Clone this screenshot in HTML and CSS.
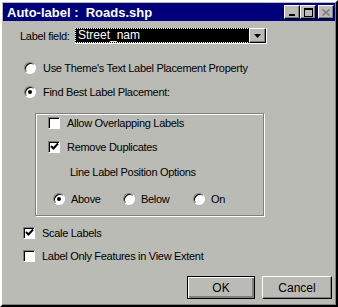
FILE: index.html
```html
<!DOCTYPE html>
<html lang="en">
<head>
    <meta charset="UTF-8">
    <title>Auto-label : Roads.shp</title>
    <link rel="stylesheet" href="styles.css">
</head>
<body>
    <div class="window">
        <div class="title-bar">
            <span class="title-text">Auto-label :  Roads.shp</span>
            <div class="title-buttons">
                <span class="title-btn">
                    <svg width="8" height="8" viewBox="0 0 8 8"><rect x="1" y="6" width="6" height="2" fill="#000"/></svg>
                </span>
                <span class="title-btn">
                    <svg width="9" height="9" viewBox="0 0 9 9"><rect x="0.5" y="0.5" width="8" height="8" fill="none" stroke="#000"/><rect x="0" y="0" width="9" height="2" fill="#000"/></svg>
                </span>
                <span class="title-btn close-btn">
                    <svg width="8" height="7" viewBox="0 0 8 7"><path d="M0.5 0.5 L7.5 6.5 M7.5 0.5 L0.5 6.5" stroke="#808080" stroke-width="1.6" fill="none"/></svg>
                </span>
            </div>
        </div>

        <div class="content">
            <div class="field-row">
                <span class="field-label">Label field:</span>
                <div class="select">
                    <span class="select-value"><span class="focus">Street_nam</span></span>
                    <span class="select-arrow">
                        <svg width="7" height="4" viewBox="0 0 7 4"><path d="M0 0 H7 L3.5 4 Z" fill="#000"/></svg>
                    </span>
                </div>
            </div>

            <div class="option-row first-radio">
                <span class="radio"></span>
                <span>Use Theme's Text Label Placement Property</span>
            </div>
            <div class="option-row second-radio">
                <span class="radio checked"></span>
                <span>Find Best Label Placement:</span>
            </div>

            <div class="group-box">
                <div class="option-row">
                    <span class="checkbox"></span>
                    <span>Allow Overlapping Labels</span>
                </div>
                <div class="option-row second-check">
                    <span class="checkbox checked">
                        <svg width="9" height="9" viewBox="0 0 9 9"><path d="M1 4 L3.5 6.5 L8 1.5" stroke="#000" stroke-width="2" fill="none"/></svg>
                    </span>
                    <span>Remove Duplicates</span>
                </div>
                <div class="group-caption">Line Label Position Options</div>
                <div class="position-row">
                    <div class="position-item">
                        <span class="radio checked"></span>
                        <span>Above</span>
                    </div>
                    <div class="position-item">
                        <span class="radio"></span>
                        <span>Below</span>
                    </div>
                    <div class="position-item">
                        <span class="radio"></span>
                        <span>On</span>
                    </div>
                </div>
            </div>

            <div class="option-row scale-row">
                <span class="checkbox checked">
                    <svg width="9" height="9" viewBox="0 0 9 9"><path d="M1 4 L3.5 6.5 L8 1.5" stroke="#000" stroke-width="2" fill="none"/></svg>
                </span>
                <span>Scale Labels</span>
            </div>
            <div class="option-row extent-row">
                <span class="checkbox"></span>
                <span>Label Only Features in View Extent</span>
            </div>

            <div class="button-row">
                <button class="btn default-btn">OK</button>
                <button class="btn">Cancel</button>
            </div>
        </div>
    </div>
</body>
</html>
```

FILE: styles.css
```css
body {
    margin: 0;
    padding: 0;
    font-family: 'Liberation Sans', Arial, sans-serif;
    font-size: 11px;
    letter-spacing: -0.3px;
    color: #000;
    background-color: #bbbbb5;
}

.window {
    width: 338px;
    height: 307px;
    box-sizing: border-box;
    padding: 1px;
    border: 2px solid;
    border-color: #fff #000 #000 #fff;
    box-shadow: inset -1px -1px 0 #808080;
    background-color: #bbbbb5;
}

.title-bar {
    height: 18px;
    background-color: #00007b;
    color: #fff;
    display: flex;
    align-items: center;
    justify-content: space-between;
    padding: 0 1px 0 4px;
}

.title-text {
    font-weight: bold;
    font-size: 13px;
    letter-spacing: 0;
    white-space: pre;
}

.title-buttons {
    display: flex;
}

.title-btn {
    width: 16px;
    height: 14px;
    box-sizing: border-box;
    background-color: #bbbbb5;
    border: 1px solid;
    border-color: #fff #000 #000 #fff;
    box-shadow: inset -1px -1px 0 #808080;
    display: flex;
    align-items: center;
    justify-content: center;
}

.close-btn {
    margin-left: 2px;
}

.content {
    display: flex;
    flex-direction: column;
}

.field-row {
    display: flex;
    align-items: center;
    height: 16px;
    margin-top: 7px;
    padding-left: 17px;
}

.field-label {
    width: 55px;
    flex-shrink: 0;
    white-space: nowrap;
}

.select {
    width: 192px;
    height: 16px;
    flex-shrink: 0;
    box-sizing: border-box;
    display: flex;
    background-color: #000;
    border-right: 1px solid #fff;
    border-bottom: 1px solid #fff;
}

.select-value {
    flex-grow: 1;
    color: #fff;
    display: flex;
    align-items: center;
    padding-left: 1px;
    font-size: 12px;
    letter-spacing: 0;
}

.focus {
    outline: 1px dotted #fff;
    outline-offset: 0;
    padding: 0 2px;
    line-height: 13px;
    flex-grow: 1;
}

.select-arrow {
    width: 17px;
    box-sizing: border-box;
    background-color: #bbbbb5;
    border: 1px solid;
    border-color: #fff #000 #000 #fff;
    box-shadow: inset -1px -1px 0 #808080;
    display: flex;
    align-items: center;
    justify-content: center;
}

.option-row {
    display: flex;
    align-items: center;
    height: 13px;
    gap: 7px;
    white-space: nowrap;
}

.first-radio {
    margin-top: 17px;
    padding-left: 21px;
}

.second-radio {
    margin-top: 11px;
    padding-left: 21px;
}

.radio {
    width: 12px;
    height: 12px;
    box-sizing: border-box;
    border-radius: 50%;
    background-color: #fff;
    border: 1px solid;
    border-color: #808080 #fff #fff #808080;
    box-shadow: inset 1px 1px 0 #000;
    position: relative;
    flex-shrink: 0;
}

.radio.checked::after {
    content: '';
    position: absolute;
    left: 3px;
    top: 3px;
    width: 4px;
    height: 4px;
    border-radius: 50%;
    background-color: #000;
}

.checkbox {
    width: 12px;
    height: 12px;
    box-sizing: border-box;
    background-color: #fff;
    border: 1px solid;
    border-color: #808080 #fff #fff #808080;
    box-shadow: inset 1px 1px 0 #000;
    display: flex;
    align-items: center;
    justify-content: center;
    flex-shrink: 0;
}

.group-box {
    margin: 15px 0 0 32px;
    width: 229px;
    height: 103px;
    box-sizing: border-box;
    border: 1px solid #808080;
    box-shadow: 1px 1px 0 #fff, inset 1px 1px 0 #fff;
    padding: 2px 0 0 12px;
}

.second-check {
    margin-top: 11px;
}

.group-caption {
    margin-top: 13px;
    height: 13px;
    line-height: 13px;
    padding-left: 22px;
}

.position-row {
    display: flex;
    margin-top: 13px;
    padding-left: 5px;
}

.position-item {
    width: 70px;
    display: flex;
    align-items: center;
    height: 13px;
    gap: 6px;
}

.scale-row {
    margin-top: 10px;
    padding-left: 20px;
}

.extent-row {
    margin-top: 10px;
    padding-left: 20px;
}

.button-row {
    display: flex;
    justify-content: flex-end;
    gap: 7px;
    margin-top: 14px;
    padding-right: 3px;
}

.btn {
    height: 23px;
    width: 70px;
    box-sizing: border-box;
    font-family: 'Liberation Sans', Arial, sans-serif;
    font-size: 12px;
    background-color: #bbbbb5;
    border: 1px solid;
    border-color: #fff #000 #000 #fff;
    box-shadow: inset -1px -1px 0 #808080;
    padding: 0;
}

.default-btn {
    width: 68px;
    border: 1px solid #000;
    box-shadow: inset 1px 1px 0 #fff, inset -2px -2px 0 #808080;
}
```
